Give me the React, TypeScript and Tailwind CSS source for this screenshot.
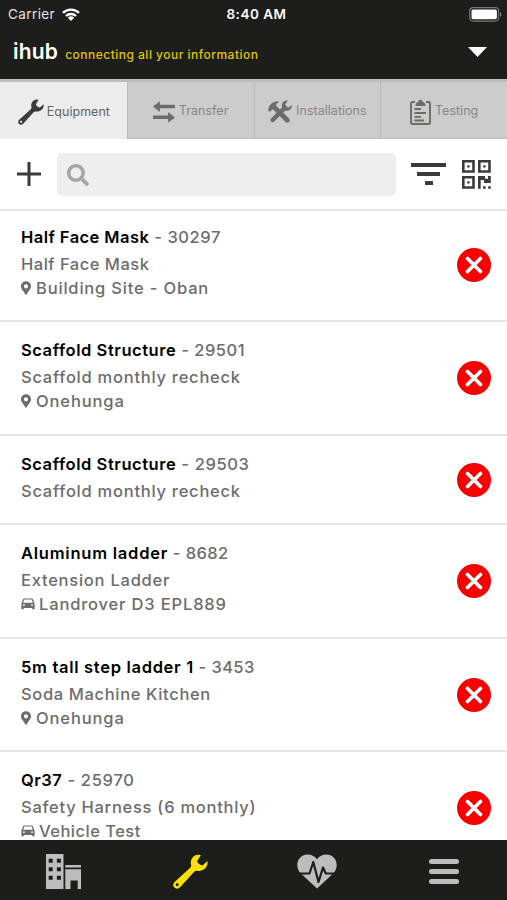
import React, { useState } from "react";
import clsx from "clsx";
import { FaMapMarkerAlt, FaSearch } from "react-icons/fa";

type Item = {
  name: string;
  code: string;
  desc: string;
  place?: string;
  kind?: "site" | "vehicle";
  row: string;
  nameCls: string;
  codeCls: string;
  descCls: string;
  placeCls?: string;
};

const items: Item[] = [
  { name: "Half Face Mask", code: "30297", desc: "Half Face Mask", place: "Building Site - Oban", kind: "site", row: "h-[111px] pt-[13px]", nameCls: "tracking-[0.43px]", codeCls: "tracking-[0.57px]", descCls: "tracking-[0.5px]", placeCls: "tracking-[0.82px]" },
  { name: "Scaffold Structure", code: "29501", desc: "Scaffold monthly recheck", place: "Onehunga", kind: "site", row: "h-[114px] pt-[15px]", nameCls: "tracking-[0.56px]", codeCls: "tracking-[0.5px]", descCls: "tracking-[0.75px]", placeCls: "tracking-[0.88px]" },
  { name: "Scaffold Structure", code: "29503", desc: "Scaffold monthly recheck", row: "h-[89px] pt-[15px]", nameCls: "tracking-[0.56px]", codeCls: "tracking-[0.63px]", descCls: "tracking-[0.75px]" },
  { name: "Aluminum ladder", code: "8682", desc: "Extension Ladder", place: "Landrover D3 EPL889", kind: "vehicle", row: "h-[114px] pt-[15px]", nameCls: "tracking-[0.77px]", codeCls: "tracking-[0.38px]", descCls: "tracking-[0.76px]", placeCls: "tracking-[0.84px]" },
  { name: "5m tall step ladder 1", code: "3453", desc: "Soda Machine Kitchen", place: "Onehunga", kind: "site", row: "h-[113px] pt-[15px]", nameCls: "tracking-[0.69px]", codeCls: "tracking-[0.38px]", descCls: "tracking-[0.65px]", placeCls: "tracking-[0.88px]" },
  { name: "Qr37", code: "25970", desc: "Safety Harness (6 monthly)", place: "Vehicle Test", kind: "vehicle", row: "h-[114px] pt-[15px]", nameCls: "tracking-[0.5px]", codeCls: "tracking-[0.7px]", descCls: "tracking-[0.73px]", placeCls: "tracking-[0.48px]" },
];

const Wrench = ({ className }: { className?: string }) => (
  <svg viewBox="0 0 36 36" fill="currentColor" className={className}>
    <path
      fillRule="evenodd"
      d="M28.5 1.2C24.5-.2 20.3 2 18.8 5.8c-.8 2-.7 4 0 5.9-.2 1.200-.7 2-1.400 2.700L1.600 28.700c-1.800 1.700-1.800 4.300-.2 5.800 1.600 1.600 4.200 1.500 5.800-.2L21.600 18.500c.8-.9 1.600-1.300 2.800-1.300 5.500 1.200 10.400-2.300 11.100-7.400.1-1 .1-1.900-.1-2.700l-4.200 3.900c-1 .8-2.200.8-3.200.1l-2.300-1.900c-.9-.8-1-2-.3-2.900zM4.300 30.100a1.500 1.500 0 1 1 0 3 1.500 1.500 0 0 1 0-3z"
    />
  </svg>
);

const Arrows = () => (
  <svg viewBox="0 0 22.500 22" fill="currentColor" className="h-[22px] w-[22px]">
    <path d="M0 5.500 7 0v3.700h15.500v3.500H7V11zM22.500 16.500l-7-5.500v3.700H0v3.500h15.500V22z" />
  </svg>
);

const Tools = () => (
  <svg viewBox="0 0 24 24" className="h-6 w-6">
    <path d="M4.600 20 17 7.600" stroke="currentColor" strokeWidth="4.400" strokeLinecap="round" />
    <path fill="currentColor" d="M20 .6c-2.600-.7-5.300.8-6 3.400-.5 2 0 3.900 1.300 5.200 1.400 1.400 3.500 1.800 5.300 1.200 2.200-.8 3.500-3 3.100-5.300L20.700 7.500l-2.800-.5-.7-2.800z" />
    <path fill="currentColor" d="M.3 11.200C-.1 6.500 3.500 1.500 9.700 1.300l1.600.9C8.800 2.900 8 4.200 8.200 5.800l12.600 12.500c1.200 1.200 1.100 2.800.2 3.700-1 1-2.600 1-3.700-.2L5.500 9.700c-1.300-.6-2.100-.2-2.300 1.500z" />
  </svg>
);

const Clipboard = () => (
  <svg viewBox="0 0 21 26" fill="none" stroke="currentColor" className="h-[26px] w-[21px]">
    <path d="M5 3H2.500A1.500 1.500 0 0 0 1 4.500v19A1.500 1.500 0 0 0 2.500 25h16a1.500 1.500 0 0 0 1.500-1.500v-19A1.500 1.500 0 0 0 18.500 3H16" strokeWidth="1.900" />
    <path fill="currentColor" stroke="none" d="M5.500 7C5.500 4.200 7 3.300 8.300 3a2.200 2.200 0 0 1 4.400 0c1.300.3 2.800 1.200 2.800 4z" />
    <path d="M4.500 10H11M4.500 14h11.500M4.500 17.800H11M4.500 21.500H14" strokeWidth="1.800" />
  </svg>
);

const Car = () => (
  <svg viewBox="0 0 14 12" className="mr-[4px] h-3 w-[14px]" fill="currentColor">
    <path
      fillRule="evenodd"
      d="M3.200.4h7.600c.5 0 .9.300 1.100.8L13.300 5c.2.400.3.800.3 1.300v4.500c0 .5-.3.800-.8.800h-.7c-.5 0-.8-.3-.8-.8V10H2.700v.8c0 .5-.3.800-.8.800h-.7c-.5 0-.8-.3-.8-.8V6.300c0-.5.100-.9.300-1.300l1.400-3.800C2.300.7 2.700.4 3.200.4zM3.300 1.600 2.200 4.800h9.600l-1.100-3.200zM1.900 6.400v1.400h2V6.400zM10.100 6.400v1.400h2V6.400z"
    />
  </svg>
);

const QrCode = () => (
  <svg viewBox="0 0 29 29" className="h-[29px] w-[29px] text-[#3b3a3c]">
    <g fill="none" stroke="currentColor" strokeWidth="2.600">
      <path d="M1.300 1.300h10.200v10.200H1.300zM17.300 1.300h10.200v10.200H17.300zM1.300 17.300h10.200v10.200H1.300z" />
    </g>
    <path fill="currentColor" d="M5.200 5.200h2.400v2.400H5.200zM21.200 5.200h2.400v2.400h-2.400zM5.200 21.200h2.400v2.400H5.200zM16 16h7v2.700h3V16h2.800v7H22v-3h-3.300v8.800H16zM21 26.200h2.600v2.600H21zM26.200 26.200h2.600v2.600h-2.600z" />
  </svg>
);

const Building = () => (
  <svg viewBox="0 0 35 35" fill="currentColor" className="ml-px h-[35px] w-[35px]">
    <path fillRule="evenodd" d="M0 0h17.500v35H0zM2.700 4.700v4h4v-4zM10.900 4.700v4h4v-4zM2.700 13.200v4h4v-4zM10.900 13.200v4h4v-4zM2.700 21.700v4h4v-4zM10.900 21.700v4h4v-4z" />
    <path d="M19.300 11H35v2.500H19.300zM19.300 15.300H35V35h-3.300v-8.600h-7.200V35h-5.200z" />
  </svg>
);

const Heart = () => (
  <svg viewBox="0 0 40 35" className="h-[35px] w-10">
    <path fill="currentColor" d="M20 34.500 5.200 20.800C1.500 17.600.3 14.500.3 10.900.3 5 4.800.6 10.600.6c4 0 7.200 1.700 9.400 4.700C22.200 2.300 25.400.6 29.400.6c5.800 0 10.300 4.400 10.300 10.300 0 3.600-1.200 6.700-4.900 9.900z" />
    <path fill="none" stroke="#1d1d1b" strokeWidth="2.200" strokeLinejoin="round" d="M0 19.500h12.500L16.300 8l5.200 20L26 13.500l2.800 6H40" />
  </svg>
);

const tabs = [
  { label: "Equipment", icon: <Wrench className="h-[26px] w-[26px] text-[#3c3c3c]" />, cls: "gap-[3px] pl-px" },
  { label: "Transfer", icon: <Arrows />, cls: "gap-1" },
  { label: "Installations", icon: <Tools />, cls: "gap-1" },
  { label: "Testing", icon: <Clipboard />, cls: "gap-1" },
];

function Header() {
  return (
    <header className="h-[79px] shrink-0 bg-[#1d1d1b] text-white">
      <div className="grid h-7 grid-cols-3 items-center pl-2 pr-[5px] text-[13.5px]">
        <div className="flex items-center gap-[7px] tracking-[0.4px] text-[#e4e4e4]">
          Carrier
          <svg viewBox="0 0 18 13" className="h-[13px] w-[18px]" fill="none" stroke="#fff" strokeWidth="2.400">
            <path d="M1 4.900a11.500 11.500 0 0 1 16 0M4 8a7.200 7.200 0 0 1 10 0" />
            <path fill="#fff" stroke="none" d="M9 13 5.900 9.800a4.500 4.500 0 0 1 6.200 0z" />
          </svg>
        </div>
        <div className="pl-[3px] text-center font-semibold tracking-[0.5px]">8:40 AM</div>
        <div className="flex justify-end">
          <svg viewBox="0 0 33 15" className="h-[15px] w-[33px]">
            <rect x=".7" y=".7" width="29" height="13.400" rx="3.500" fill="none" stroke="#777" strokeWidth="1.200" />
            <rect x="2.500" y="2.500" width="25.400" height="9.800" rx="1.800" fill="#fff" />
            <path d="M31 5v5c2-1 2-4 0-5z" fill="#777" />
          </svg>
        </div>
      </div>
      <div className="flex h-12 items-center justify-between pl-[13px] pr-5">
        <div className="flex items-baseline gap-[7px] pt-px">
          <span className="text-[21px] font-semibold leading-none tracking-[0.2px]">ihub</span>
          <span className="text-[12px] font-medium tracking-[0.49px] text-[#e2c400]">connecting all your information</span>
        </div>
        <svg viewBox="0 0 19 10" className="h-[10px] w-[19px]" fill="#fff">
          <path d="M0 0h19L9.500 10z" />
        </svg>
      </div>
    </header>
  );
}

export default function App() {
  const [active, setActive] = useState("Equipment");
  const [query, setQuery] = useState("");

  return (
    <div className="flex h-[900px] w-[507px] flex-col overflow-hidden bg-white font-['Inter',sans-serif]">
      <Header />

      {/* tabs */}
      <div className="grid h-[60px] shrink-0 grid-cols-4 border-t-[3px] border-[#bdbdbd] bg-[#cccccc]">
        {tabs.map((t) => (
          <button
            key={t.label}
            onClick={() => setActive(t.label)}
            className={clsx(
              "flex items-center justify-center pt-[3px] text-[12.5px]",
              t.cls,
              t.label === active ? "bg-[#ececec] text-[#646464]" : "border-b border-l border-[#b9b9b9] text-[#6c6c69]"
            )}
          >
            {t.icon}
            <span className={clsx("tracking-[0.03px]", t.label !== active && "text-[#868686]")}>{t.label}</span>
          </button>
        ))}
      </div>

      {/* search bar */}
      <div className="flex h-[72px] shrink-0 items-center border-b-2 border-[#e4e4e4] pl-[17px] pr-4">
        <svg viewBox="0 0 24 24" className="h-6 w-6" stroke="#3b3a3c" strokeWidth="3">
          <path d="M12 0v24M0 12h24" />
        </svg>
        <label className="ml-4 flex h-[43px] w-[339px] items-center rounded-[5px] bg-[#eeeeee] pl-[10px] pt-px">
          <FaSearch size={22} className="text-[#a5a5a5]" />
          <input value={query} onChange={(e) => setQuery(e.target.value)} className="ml-2 w-64 bg-transparent outline-none" />
        </label>
        <div className="ml-[15px] flex flex-col items-center gap-[5px]">
          <div className="h-1 w-[35px] bg-[#3b3a3c]" />
          <div className="h-1 w-[23px] bg-[#3b3a3c]" />
          <div className="h-1 w-2 bg-[#3b3a3c]" />
        </div>
        <div className="ml-auto">
          <QrCode />
        </div>
      </div>

      {/* equipment list */}
      <main className="min-h-0 flex-1 overflow-hidden">
        {items.map((it) => (
          <div key={it.code} className={clsx("flex justify-between border-b-2 border-[#e6e6e6] pl-[21px] pr-4 text-[16.5px] font-medium text-[#6c6c6c]", it.row)}>
            <div className="whitespace-nowrap">
              <div className="leading-[27px]">
                <span className={clsx("font-semibold text-black", it.nameCls)}>{it.name}</span>
                <span className={it.codeCls}> - {it.code}</span>
              </div>
              <div className={clsx("leading-[27px]", it.descCls)}>{it.desc}</div>
              {it.place && (
                <div className="flex items-center leading-[20px]">
                  {it.kind === "site" ? <FaMapMarkerAlt className="mr-[5px] h-[14px] w-[10px]" /> : <Car />}
                  <span className={it.placeCls}>{it.place}</span>
                </div>
              )}
            </div>
            <svg viewBox="0 0 34 34" className="-mt-[15px] h-[34px] w-[34px] self-center">
              <circle cx="17" cy="17" r="17" fill="#f90000" />
              <path d="m10.500 10.500 13 13m0-13-13 13" stroke="#fff" strokeWidth="3.800" strokeLinecap="round" />
            </svg>
          </div>
        ))}
      </main>

      {/* bottom navigation */}
      <nav className="grid h-[60px] shrink-0 grid-cols-4 place-items-center bg-[#1d1d1b] pt-[3px] text-[#bdbdbd]">
        <Building />
        <Wrench className="h-[35px] w-[35px] text-[#fce000]" />
        <Heart />
        <div className="flex flex-col gap-[5px]">
          <div className="h-[5px] w-[30px] rounded-full bg-current" />
          <div className="h-[5px] w-[30px] rounded-full bg-current" />
          <div className="h-[5px] w-[30px] rounded-full bg-current" />
        </div>
      </nav>
    </div>
  );
}
